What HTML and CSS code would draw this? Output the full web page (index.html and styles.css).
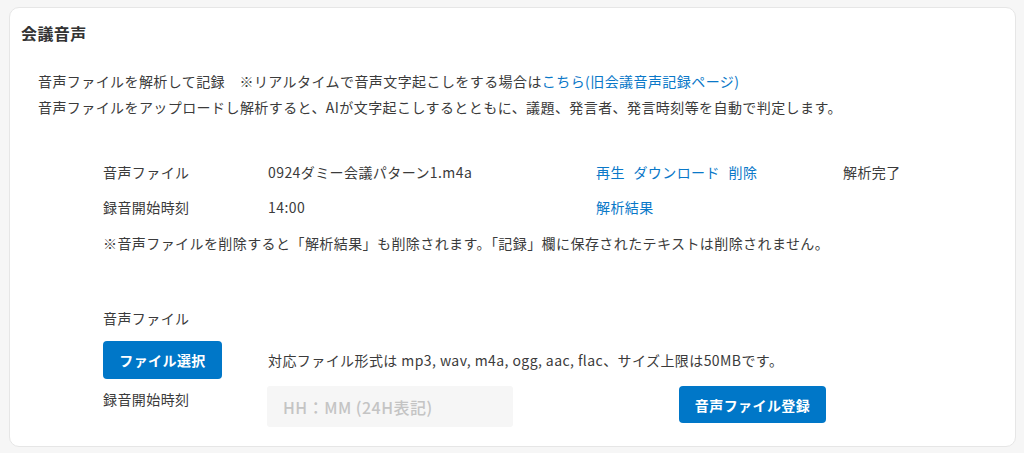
FILE: index.html
```html
<!DOCTYPE html>
<html lang="ja">
<head>
    <meta charset="UTF-8">
    <meta name="viewport" content="width=device-width, initial-scale=1.0">
    <title>会議音声</title>
    <link rel="stylesheet" href="styles.css">
</head>
<body>
    <div class="card">
        <h2 class="card-title">会議音声</h2>
        <div class="intro">
            <p>音声ファイルを解析して記録　※リアルタイムで音声文字起こしをする場合は<a href="#">こちら(旧会議音声記録ページ)</a></p>
            <p>音声ファイルをアップロードし解析すると、AIが文字起こしするとともに、議題、発言者、発言時刻等を自動で判定します。</p>
        </div>

        <div class="file-info">
            <div class="info-row">
                <span class="col-label">音声ファイル</span>
                <span class="col-value">0924ダミー会議パターン1.m4a</span>
                <span class="col-links">
                    <a href="#">再生</a>
                    <a href="#">ダウンロード</a>
                    <a href="#">削除</a>
                </span>
                <span class="col-status">解析完了</span>
            </div>
            <div class="info-row">
                <span class="col-label">録音開始時刻</span>
                <span class="col-value">14:00</span>
                <span class="col-links"><a href="#">解析結果</a></span>
            </div>
            <p class="note">※音声ファイルを削除すると「解析結果」も削除されます。「記録」欄に保存されたテキストは削除されません。</p>
        </div>

        <div class="upload">
            <div class="upload-label">音声ファイル</div>
            <div class="upload-row">
                <button class="btn btn-select">ファイル選択</button>
                <span class="hint">対応ファイル形式は mp3, wav, m4a, ogg, aac, flac、サイズ上限は50MBです。</span>
            </div>
            <div class="upload-row time-row">
                <span class="time-label">録音開始時刻</span>
                <input type="text" class="time-input" placeholder="HH：MM (24H表記)">
                <button class="btn btn-submit">音声ファイル登録</button>
            </div>
        </div>
    </div>
</body>
</html>
```

FILE: styles.css
```css
body {
    margin: 0;
    padding: 7px 8px 6px 9px;
    background-color: #f6f6f6;
    font-family: "Noto Sans CJK JP", "Noto Sans", sans-serif;
    font-size: 14px;
    letter-spacing: 0.03em;
    color: #3b3b3b;
}
a {
    color: #0a78c8;
    text-decoration: none;
}
p {
    margin: 0;
}
.card {
    background: #fff;
    border: 1px solid #e6e6e6;
    border-radius: 10px;
    padding: 13px 11px 19px 11px;
    height: 406px;
}
.card-title {
    margin: 0;
    font-size: 16px;
    line-height: 24px;
    font-weight: bold;
    color: #333;
}
.intro {
    margin-top: 23px;
    padding-left: 17px;
    line-height: 26px;
}
.file-info {
    margin-top: 34px;
    padding-left: 82px;
}
.info-row {
    display: flex;
    height: 35px;
    align-items: center;
}
.col-label {
    width: 165px;
}
.col-value {
    width: 328px;
}
.col-links {
    width: 247px;
}
.col-links a {
    margin-right: 5px;
}
.note {
    margin-top: 6px;
    line-height: 26px;
}
.upload {
    margin-top: 49px;
    padding-left: 82px;
}
.upload-label {
    line-height: 26px;
}
.upload-row {
    display: flex;
    align-items: center;
    margin-top: 10px;
}
.btn {
    background-color: #0077c8;
    color: #fff;
    border: none;
    border-radius: 4px;
    font-family: inherit;
    font-size: 14px;
    font-weight: bold;
    letter-spacing: 0.03em;
    cursor: pointer;
}
.btn-select {
    width: 119px;
    height: 38px;
    margin-right: 46px;
}
.time-row {
    margin-top: 7px;
    align-items: flex-start;
}
.time-label {
    width: 164px;
    line-height: 26px;
}
.time-input {
    width: 246px;
    height: 41px;
    box-sizing: border-box;
    border: none;
    border-radius: 3px;
    background: #f6f6f6;
    padding: 0 16px;
    font-family: inherit;
    font-size: 16px;
    font-weight: 500;
    letter-spacing: 0.03em;
    color: #3b3b3b;
}
.time-input::placeholder {
    color: #c4c4c4;
}
.btn-submit {
    width: 147px;
    height: 37px;
    margin-left: 166px;
}
```
